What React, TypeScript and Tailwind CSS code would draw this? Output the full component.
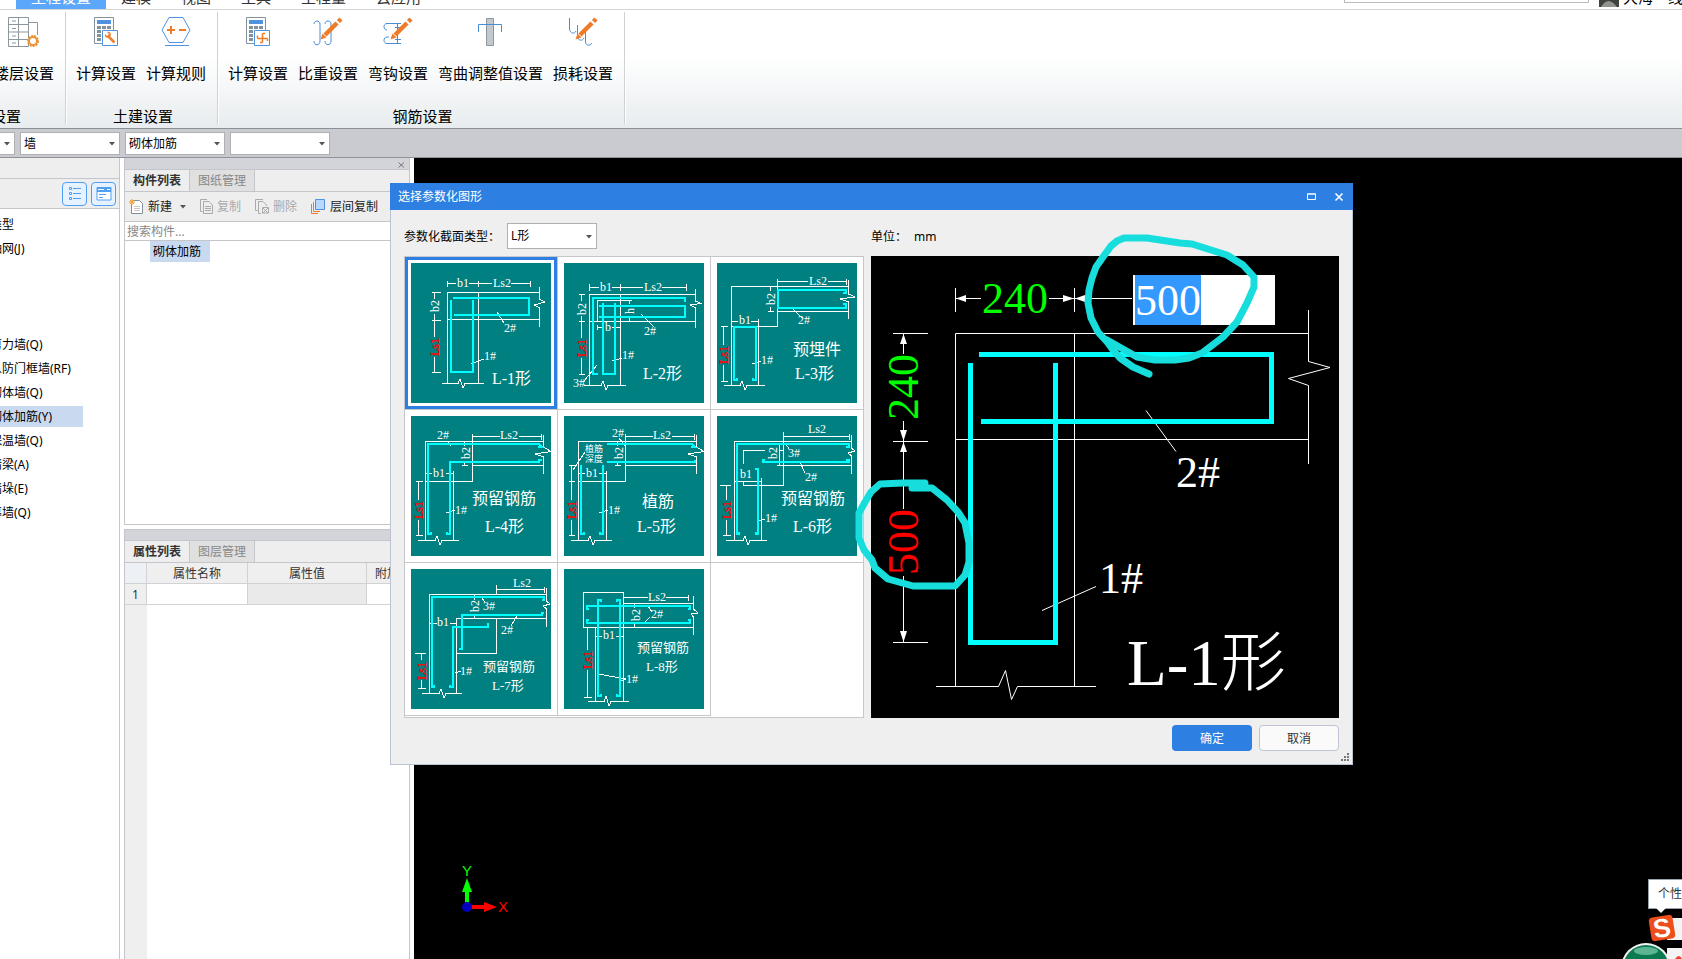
import { useEffect, useRef, type ReactNode } from "react";
import clsx from "clsx";

type Label = [text: string, x: number, y: number, size?: number];

interface Shape {
  name: string;
  lines: string;
  bars: string;
  labels: Label[];
  // vertical labels, given by their centre
  turned: Label[];
}

const shapes: Shape[] = [
  {
    name: "L-1形",
    lines:
      "M36.5 18V24M67.5 18V24M119.5 18V24M36.5 20.5H45M58 20.5H81M100 20.5H119.5M36.5 120V29.5H128.5M67.5 29.5V120M36.5 56.5H128.5M128.5 24V36L134 39L123 42L128.5 45V64M21 29.5H30M21 57.5H30M21 109.5H30M23.5 29.5V36M23.5 51V74M23.5 94V109.5M86 49L93 60M60 101L73 96M31 120.5H47L49 116L52 125L54 120.5H73",
    bars: "M42 35H118V52H43M40 37V109H62V37",
    labels: [["b1", 46, 24], ["Ls2", 82, 24], ["2#", 93, 69], ["1#", 73, 97], ["L-1形", 81, 121, 16]],
    turned: [["b2", 24, 43], ["Ls1", 24, 84]],
  },
  {
    name: "L-2形",
    lines:
      "M25.5 21V28M56.5 21V28M122.5 21V28M25.5 24.5H35M48 24.5H79M98 24.5H122.5M25.5 122V31.5H131.5M56.5 31.5V122M25.5 58.5H131.5M131.5 26V38L137 40.5L126 42L131.5 45V65M15 31.5H21M15 58.5H21M15 111.5H21M17.5 31.5V38M17.5 53V75M17.5 95V111.5M33.5 58V37.5H68M65.5 37.5V41M65.5 54V58.5M33.5 62V67M33.5 64.5H40M48 64.5H56.5M77 51L90 64M48 98L58 95M33 102L20 118M20 122.5H37L39 118L42 127L44 122.5H62",
    bars: "M34 111H29V35H121V39M35 43H121V54H35M39 40V111H51V40",
    labels: [["b1", 36, 28], ["Ls2", 80, 28], ["b", 41, 68], ["2#", 80, 72], ["1#", 58, 96], ["3#", 9, 124], ["L-2形", 79, 116, 16]],
    turned: [["b2", 18, 46], ["h", 66, 48], ["Ls1", 18, 85]],
  },
  {
    name: "L-3形",
    lines:
      "M60.5 16V63.5M129.5 16V22M60.5 18.5H91M111 18.5H129.5M14.5 122V23.5H131.5M131.5 17V31L138 34L123 36L131.5 39V56M14.5 63.5H60.5M60.5 48.5H131.5M41.5 56V122M51 48.5H57M53.5 24V28M53.5 44V48.5M14.5 58.5H21M34 58.5H41.5M4 63.5H11M4 118.5H11M6.5 63.5V82M6.5 102V118.5M74 44L85 55M35 101L44 98M7 122.5H23L25 118L28 127L30 122.5H48",
    bars: "M126 30H129V27H61V45H129V41H126M20 115V117H17V64H39V117H36V115",
    labels: [["Ls2", 92, 22], ["b1", 22, 61], ["2#", 81, 61], ["1#", 44, 101], ["预埋件", 76, 92, 16], ["L-3形", 78, 116, 16]],
    turned: [["b2", 54, 36], ["Ls1", 7, 92]],
  },
  {
    name: "L-4形",
    lines:
      "M61.5 18V65.5M130.5 18V24M61.5 20.5H89M108 20.5H130.5M14.5 124V25.5H132.5M132.5 19V31L140 35.5L124 38L132.5 41V58M14.5 65.5H61.5M61.5 49.5H132.5M42.5 55V124M51 49.5H57M53.5 26V30M53.5 46V49.5M14.5 57.5H21M35 57.5H42.5M5 65.5H12M5 119.5H12M7.5 65.5V84M7.5 104V119.5M36 25L40 30M35 97L44 94M7 124.5H24L26 120L29 129L31 124.5H48",
    bars: "M127 31H131L128 28H17V118H20V116M131 44H128V46H39V118H36V116",
    labels: [["Ls2", 89, 23], ["2#", 26, 23], ["b1", 22, 61], ["1#", 44, 98], ["预留钢筋", 61, 88, 16], ["L-4形", 74, 116, 16]],
    turned: [["b2", 55, 37], ["Ls1", 8, 94]],
  },
  {
    name: "L-5形",
    lines:
      "M61.5 18V65.5M130.5 18V24M61.5 20.5H89M108 20.5H130.5M14.5 124V25.5H132.5M132.5 19V31L140 35.5L124 38L132.5 41V58M14.5 65.5H61.5M61.5 49.5H132.5M42.5 55V124M51 49.5H57M53.5 26V30M53.5 46V49.5M14.5 57.5H21M35 57.5H42.5M5 49.5H11M5 65.5H11M5 119.5H11M7.5 49.5V84M7.5 104V119.5M21 36L9 54M55 22L61 30M35 97L44 94M7 124.5H24L26 120L29 129L31 124.5H48",
    bars: "M127 31H131L128 28H43M43 46H131V44M17 49V118H20V116M39 49V118H36V116",
    labels: [["Ls2", 89, 23], ["2#", 48, 21], ["植筋", 21, 36, 9], ["深度", 21, 46, 9], ["b1", 22, 61], ["1#", 44, 98], ["植筋", 78, 91, 16], ["L-5形", 73, 116, 16]],
    turned: [["b2", 55, 37], ["Ls1", 8, 94]],
  },
  {
    name: "L-6形",
    lines:
      "M66.5 16V69.5M132.5 18V24M66.5 20.5H132.5M17.5 124V25.5H134.5M134.5 19V32L138 35L131 37L134.5 40V58M60 49.5H134.5M26.5 48V34.5H48M62 34.5H66.5M26.5 66V69.5H66.5M44.5 62V124M17.5 65.5H44.5M62.5 28V49.5M3 69.5H14M6 119.5H14M9.5 69.5V84M9.5 104V119.5M69 28L72 33M83 46L88 57M42 105L48 103M9 124.5H26L28 120L31 129L33 124.5H50",
    bars: "M129 31H132V28H20V118H22V116M48 44H46V46H132V44H129M38 53H41V118H39V116",
    labels: [["Ls2", 91, 17], ["3#", 71, 41], ["b1", 23, 62], ["2#", 88, 65], ["1#", 48, 106], ["预留钢筋", 64, 88, 16], ["L-6形", 76, 116, 16]],
    turned: [["b2", 56, 37], ["Ls1", 10, 94]],
  },
  {
    name: "L-7形",
    lines:
      "M85.5 16V25M133.5 18V24M85.5 20.5H133.5M18.5 124V25.5H135.5M135.5 19V32L139 35L132 37L135.5 40V58M45.5 124V49.5H135.5M85.5 49.5V84.5H45.5M63.5 25V31M63.5 45V50M18.5 54.5H26M39 54.5H45.5M4 84.5H15M7 119.5H15M10.5 84.5V91M10.5 111V119.5M70 28L74 33M106 47L100 57M44 104L50 102M11 124.5H28L30 120L33 129L35 124.5H51",
    bars: "M131 31H133V28H21V118H23V116M133 44H131V46H51V80H48M77 54V58H42V118H39V116",
    labels: [["Ls2", 102, 18], ["3#", 72, 41], ["b1", 26, 57], ["2#", 90, 65], ["1#", 49, 106], ["预留钢筋", 72, 102, 13], ["L-7形", 81, 121, 13]],
    turned: [["b2", 64, 37], ["Ls1", 11, 102]],
  },
  {
    name: "L-8形",
    lines:
      "M59.5 28.5H84M102 28.5H124.5M124.5 26V32M59.5 132V23.5H19.5V58.5H129.5M59.5 34.5H129.5M129.5 27V40L134 44L127 45L129.5 48V66M31.5 58.5V132M70.5 34.5V39M70.5 54V58.5M31.5 67.5H38M52 67.5H59.5M20 58.5H28M20 128.5H28M23.5 58.5V81M23.5 101V128.5M84 37L88 43M80 54L86 48M34 105L62 110L56 112M24 132.5H40L42 127L45 137L47 132.5H65",
    bars: "M25 40H23V37H126V40H124M25 51H23V54H126V51H124M37 33V31H34V127H37V125M53 33V31H56V127H53V125",
    labels: [["Ls2", 84, 32], ["2#", 87, 49], ["b1", 39, 70], ["1#", 62, 114], ["预留钢筋", 73, 83, 13], ["L-8形", 82, 102, 13]],
    turned: [["b2", 72, 46], ["Ls1", 24, 91]],
  },
];

function Thumbnail({ shape }: { shape: Shape }) {
  return (
    <svg viewBox="0 0 140 140" className="block h-[140px] w-[140px] bg-[#008080]" fontFamily="'Liberation Serif', 'Noto Sans CJK SC', serif">
      <g fill="none" shapeRendering="crispEdges">
        <path d={shape.lines} stroke="#fff" />
        <path d={shape.bars} stroke="#0ff" strokeWidth="2" />
      </g>
      {shape.labels.map(([text, x, y, size = 12]) => (
        <text key={text + y} x={x} y={y} fontSize={size} fill="#fff">
          {text}
        </text>
      ))}
      {shape.turned.map(([text, x, y]) => (
        <text
          key={text}
          transform={`translate(${x + 4} ${y}) rotate(-90)`}
          textAnchor="middle"
          fontSize="12"
          fill={text === "Ls1" ? "#f00" : "#fff"}
          stroke={text === "Ls1" ? "#f00" : "none"}
          strokeWidth=".4"
        >
          {text}
        </text>
      ))}
    </svg>
  );
}

function Preview() {
  const input = useRef<HTMLInputElement>(null);

  useEffect(() => {
    input.current?.focus();
    input.current?.select();
  }, []);

  return (
    <div className="relative h-[462px] flex-1 bg-black">
      <svg width="468" height="462" viewBox="0 0 468 462" fontFamily="'Liberation Serif', 'Noto Sans CJK SC', serif">
        <g fill="none" stroke="#fff">
          <path d="M84.5 430.5V77.5H437.5M203.5 77.5V430.5M84.5 183.5H437.5M437.5 54V105.5L459 111.5L417.5 122.5L437.5 129.5V208" />
          <path d="M84.5 32V56M203.5 32V56M84.5 42.5H110M178 42.5H261" />
          <path d="M22 77.5H57M22 185.5H57M22 386.5H57M32.5 77.5V98M32.5 165V253M32.5 320V386.5" />
          <path d="M275 154.5L305 195.5M171 354.5L225 330.5M65 430.5H127.5L134.5 414.5L140.5 443.5L146.5 430.5H225" />
        </g>
        <path
          fill="#fff"
          d="M85 42.5L95 39V46ZM203 42.5L192 39V46ZM204 42.5L214 39V46ZM32.5 78L29 88H36ZM32.5 185L29 174H36ZM32.5 186L29 196H36ZM32.5 386L29 375H36Z"
        />
        <path fill="none" stroke="#0ff" strokeWidth="5" d="M108 98.5H400.5V165.5H110M99.5 107V386.5H184.5V107" />
        <g fontSize="44" fill="#fff">
          <text x="111" y="57" fill="#0f0">240</text>
          <text transform="translate(47 131) rotate(-90)" textAnchor="middle" fill="#0f0">240</text>
          <text transform="translate(47 286) rotate(-90)" textAnchor="middle" fill="#f00">500</text>
          <text x="305" y="231">2#</text>
          <text x="228" y="337">1#</text>
          <text x="256" y="429" fontSize="65" className="font-light">L-1形</text>
        </g>
      </svg>
      <input
        ref={input}
        aria-label="Ls2"
        defaultValue="500"
        className="absolute top-[19px] left-[262px] h-[50px] w-[142px] bg-white px-[2px] py-[3px] font-['Liberation_Serif',serif] text-[44px] leading-[44px] text-black outline-none selection:bg-[#3399ff] selection:text-white"
      />
      <svg
        width="468"
        height="462"
        viewBox="0 0 468 462"
        className="pointer-events-none absolute inset-0 overflow-visible"
        fill="none"
        stroke="#17dddd"
        strokeWidth="7"
        strokeLinecap="round"
        strokeLinejoin="round"
      >
        <path d="M278 118L262 111L249 102L242 94L237 87L227 76L220 62L217 47L218 34L221 22L225 11L232 1L240 -10L246 -15L253 -18H276L309 -13L321 -12L356 -1L372 9L383 21V31L376 47L366 66L352 81L331 97L318 102L304 104H284L266 101L236 84" />
        <path d="M54 227H32L9 228L0 236L-6 246L-12 257V282L-7 294L1 304L4 312L17 323L42 330H84L94 319L98 306V287L94 267L87 256L76 244L61 232H41" />
      </svg>
    </div>
  );
}

function Select({ label, value, className }: { label: string; value: string; className?: string }) {
  return (
    <div className={clsx("relative border border-[#b0b0b0] bg-white text-xs", className)}>
      <select aria-label={label} defaultValue={value} className="h-full w-full appearance-none pl-[3px] outline-none">
        <option>{value}</option>
      </select>
      <svg width="6" height="4" className="pointer-events-none absolute top-1/2 right-1 -mt-[2px]">
        <path d="M0 0H6L3 3.5Z" fill="#555" />
      </svg>
    </div>
  );
}

function Pencil() {
  return (
    <g>
      <path d="M7.500 22.500L9.500 16.500L13.500 20.500Z" fill="#ee7b28" />
      <path d="M12 18L24 6" stroke="#ee7b28" strokeWidth="4.500" />
      <path d="M25.500 4.500L28 2" stroke="#ee7b28" strokeWidth="4.500" />
    </g>
  );
}

function Calculator({ children }: { children: ReactNode }) {
  return (
    <svg width="26" height="30" viewBox="0 0 26 30">
      <path d="M1.500 .5H20.500V26.500H1.500Z" fill="#fff" stroke="#83919a" />
      <path d="M4 3H18V7H4Z" fill="#4f93e0" />
      <path d="M4 9H8V12H4ZM9 9H13V12H9ZM14 9H18V12H14ZM4 13H8V16H4ZM4 17H8V20H4ZM4 21H8V24H4Z" fill="#83919a" />
      <path d="M9.500 13.500H24.500V28.500H9.500Z" fill="#fff" stroke="#4f93e0" />
      {children}
    </svg>
  );
}

const floorIcon = (
  <svg width="32" height="30" viewBox="0 0 32 30" fill="none" stroke="#8b979e">
    <path d="M.5 .5H20.500V29.500H.5ZM.5 7.500H20.500M.5 15H20.500M.5 22.500H20.500M10.500 .5V29.500M4 4H8M4 11.500H8M4 19H8M4 26H8M20.500 5.500H29.500V18" />
    <circle cx="25" cy="24" r="5" fill="#fff" stroke="#ec9238" strokeWidth="2" strokeDasharray="2 1" />
    <circle cx="25" cy="24" r="4" stroke="#ec9238" strokeWidth="2" />
  </svg>
);

const wrenchIcon = (
  <Calculator>
    <path d="M15 19L21.500 25.500" stroke="#ee8130" strokeWidth="2.500" />
    <path d="M12 17L14 19L16 17L14 15C17 14 19 17 17 20C14 22 11 20 12 17Z" fill="#ee8130" />
  </Calculator>
);

const rebarCalcIcon = (
  <Calculator>
    <path d="M17.500 16.500V25.500M12.500 21.500H22.500M17.500 16.500H20M12.500 21.500V18.500M22.500 21.500V24M17.500 25.500H15" stroke="#ee7b28" strokeWidth="1.500" fill="none" />
  </Calculator>
);

const rulesIcon = (
  <svg width="30" height="30" viewBox="0 0 30 30" fill="none">
    <path d="M8 .5H22L29 13L22 25.500H8L1 13ZM4 28.500H28" stroke="#4f93e0" />
    <path d="M6 13H14M10 9V17M18 13H25" stroke="#ee7b28" strokeWidth="2" />
  </svg>
);

const weightIcon = (
  <svg width="30" height="30" viewBox="0 0 30 30" fill="none">
    <path d="M1 7C1 3 7 3 7 7V24C7 29 1 29 1 24M12 7C12 3 18 3 18 7V24C18 29 12 29 12 24" stroke="#4a8dd5" />
    <Pencil />
  </svg>
);

const hookIcon = (
  <svg width="30" height="30" viewBox="0 0 30 30" fill="none">
    <path d="M18 6.500H4C0 6.500 0 13 4 13M18 26.500H4C0 26.500 0 20 4 20H6M14.500 7V26M12 10.500H18M12 22.500H18" stroke="#4a8dd5" />
    <Pencil />
  </svg>
);

const bendIcon = (
  <svg width="26" height="30" viewBox="0 0 26 30" fill="none">
    <path d="M8.500 1.500H15.500V28.500H8.500Z" fill="#c3c8cc" stroke="#8b979e" />
    <path d="M.5 15V7.500H23.500V15" stroke="#4a8dd5" />
  </svg>
);

const lossIcon = (
  <svg width="30" height="30" viewBox="0 0 30 30" fill="none">
    <path d="M1.500 1V12C2 17 7 17 8 14M9.500 8V20C10 24 15 24 16 21M17.500 15V25C18 29 22 29 24 26" stroke="#4a8dd5" />
    <Pencil />
  </svg>
);

function RibbonButton({ icon, label }: { icon: ReactNode; label: string }) {
  return (
    <button type="button" className="flex flex-col items-center px-[5px]">
      {icon}
      <span className="mt-4 text-[15px] leading-5 whitespace-nowrap">{label}</span>
    </button>
  );
}

function RibbonGroup({ title, children }: { title: string; children: ReactNode }) {
  return (
    <div className="flex flex-col pt-[7px] pr-[6px] pl-1">
      <div className="flex">{children}</div>
      <div className="mt-[23px] pl-1 text-center text-[15px] leading-5">{title}</div>
    </div>
  );
}

const Divider = () => <div className="mt-[2px] mb-[3px] w-[2px] border-l border-[#cfd2d5] bg-white" />;

function PaneTabs({ active, other }: { active: string; other: string }) {
  return (
    <div className="flex h-[22px] shrink-0 border-b border-[#c4c6cc] bg-[#eeeeef] text-xs">
      <button type="button" className="w-16 font-bold text-[#333]">
        {active}
      </button>
      <button type="button" className="w-[66px] border-x border-[#c4c6cc] bg-[#e0e0e1] text-[#888]">
        {other}
      </button>
    </div>
  );
}

const tools = [
  {
    label: "新建",
    icon: (
      <svg width="15" height="15" viewBox="0 0 15 15" fill="none">
        <path d="M3.500 1.500H10.500L13.500 4.500V14.500H2.500V5" fill="#fff" stroke="#83919a" />
        <path d="M5 7.500H11M5 9.500H11M5 11.500H11" stroke="#cfc4c4" />
        <path d="M0 3H6M3 0V6M1 1L5 5M5 1L1 5" stroke="#f59a23" />
      </svg>
    ),
  },
  {
    label: "复制",
    disabled: true,
    icon: (
      <svg width="13" height="15" viewBox="0 0 13 15" fill="none" stroke="#aaa">
        <path d="M2.500 12.500H.5V.5H7M3.500 2.500H9L12.500 6V14.500H3.500ZM5 7.500H11M5 9.500H11M5 11.500H11" />
      </svg>
    ),
  },
  {
    label: "删除",
    disabled: true,
    icon: (
      <svg width="14" height="15" viewBox="0 0 14 15" fill="none" stroke="#aaa">
        <path d="M2.500 11.500H.5V.5H8M6 14.500H3.500V2.500H8L11.500 6V7M7.500 8.500H13.500V14H7.500ZM8 9L13 14M13 9L8 14" />
      </svg>
    ),
  },
  {
    label: "层间复制",
    icon: (
      <svg width="15" height="15" viewBox="0 0 15 15" fill="none">
        <path d="M.5 5V14.500H7M2.500 3V12.500H9" stroke="#ee7b28" />
        <path d="M4.500 .5H13.500V10.500H4.500Z" fill="#b9d7fb" stroke="#4f93e0" />
      </svg>
    ),
  },
];

const walls = ["剪力墙(Q)", "人防门框墙(RF)", "砌体墙(Q)", "砌体加筋(Y)", "保温墙(Q)", "暗梁(A)", "墙垛(E)", "幕墙(Q)"];

function NavPane() {
  return (
    <aside className="w-[120px] shrink-0 overflow-hidden border-r border-[#c4c6cc] bg-white text-xs">
      <div className="h-[21px] border-b border-[#c4c6cc] bg-[#eeeeef]" />
      <div className="flex h-[30px] items-center justify-end gap-1 border-b border-[#c4c6cc] bg-[#eeeeef] pr-[3px]">
        <button type="button" aria-label="列表" className="flex h-6 w-[25px] items-center justify-center rounded-sm border border-[#4fa0f5] bg-[#e6f2ff]">
          <svg width="14" height="14" viewBox="0 0 14 14" fill="none" stroke="#4fa0f5">
            <path d="M1.500 .5H3.500V2.500H1.500ZM1.500 5.500H3.500V7.500H1.500ZM1.500 10.500H3.500V12.500H1.500ZM5 1.500H13M5 6.500H13M5 11.500H13" />
          </svg>
        </button>
        <button type="button" aria-label="图标" className="flex h-6 w-[25px] items-center justify-center rounded-sm border border-[#4fa0f5] bg-[#e6f2ff]">
          <svg width="16" height="14" viewBox="0 0 16 14" fill="none">
            <path d="M1 .5H15V13H1Z" fill="#fff" stroke="#4fa0f5" />
            <path d="M1 0H15V5H1Z" fill="#4fa0f5" />
            <path d="M2 2.500H8M11 2.500H14" stroke="#fff" />
            <path d="M3 7.500H10M3 10.500H7" stroke="#4fa0f5" />
          </svg>
        </button>
      </div>
      <ul className="pt-1 whitespace-nowrap">
        {["类型", "轴网(J)"].map((item) => (
          <li key={item} className="-ml-[10px] leading-6">
            {item}
          </li>
        ))}
      </ul>
      <ul className="pt-[71px] whitespace-nowrap">
        {walls.map((item) => (
          <li key={item} className="flex h-6 items-center">
            <a
              href="#"
              className={clsx("leading-[21px]", item === "砌体加筋(Y)" ? "w-[83px] bg-[#c9d9ef]" : "w-full")}
            >
              <span className="-ml-[10px]">{item}</span>
            </a>
          </li>
        ))}
      </ul>
    </aside>
  );
}

function ComponentPane() {
  return (
    <section className="mr-1 ml-1 flex w-[286px] shrink-0 flex-col text-xs">
      <div className="border-x border-b border-[#c4c6cc]">
        <div className="flex h-3 items-end justify-end border-b border-[#c4c6cc] bg-[#d3d4d9] pr-1 pb-px">
          <button type="button" aria-label="关闭" className="flex">
            <svg width="7" height="6" viewBox="0 0 7 6">
              <path d="M.5 .5L6 5.500M6 .5L.5 5.500" stroke="#777" />
            </svg>
          </button>
        </div>
        <PaneTabs active="构件列表" other="图纸管理" />
        <div className="flex h-[30px] items-center gap-[14px] border-b border-[#c4c6cc] bg-[#eeeeef] pl-1">
          {tools.map(({ label, icon, disabled }) => (
            <button
              key={label}
              type="button"
              disabled={disabled}
              className={clsx("flex items-center gap-1 whitespace-nowrap", disabled ? "text-[#aaa]" : "text-[#222]")}
            >
              {icon}
              {label}
              {label === "新建" && (
                <svg width="6" height="4" className="ml-1">
                  <path d="M0 0H6L3 3.500Z" fill="#555" />
                </svg>
              )}
            </button>
          ))}
        </div>
        <input
          type="text"
          aria-label="搜索构件"
          placeholder="搜索构件..."
          className="block h-[19px] w-full border-b border-[#c4c6cc] px-[2px] outline-none placeholder:text-[#888]"
        />
        <ul className="h-[283px] pl-[25px]">
          <li className="w-[60px] bg-[#c9d9ef] pl-[3px] leading-[21px]">砌体加筋</li>
        </ul>
      </div>
      <div className="mt-1 flex flex-1 flex-col border-x border-t border-[#c4c6cc]">
        <div className="h-[11px] shrink-0 border-b border-[#c4c6cc] bg-[#d3d4d9]" />
        <PaneTabs active="属性列表" other="图层管理" />
        <table className="w-full table-fixed border-separate border-spacing-0 text-[#333]">
          <thead>
            <tr className="h-[21px] bg-[#efefef]">
              <th className="w-[22px] border-r border-b border-[#d2d2d4] bg-[#edf1f6]" />
              <th className="w-[101px] border-r border-b border-[#d2d2d4] p-0 pt-px font-normal">属性名称</th>
              <th className="w-[119px] border-r border-b border-[#d2d2d4] p-0 pt-px font-normal">属性值</th>
              <th className="overflow-hidden border-b border-[#d2d2d4] p-0 pt-px pl-2 text-left font-normal whitespace-nowrap">附加</th>
            </tr>
          </thead>
          <tbody>
            <tr className="h-[21px]">
              <td className="border-r border-b border-[#d2d2d4] bg-[#efefef] p-0 pt-px text-center">1</td>
              <td className="border-r border-b border-[#d2d2d4]" />
              <td className="border-r border-b border-[#d2d2d4] bg-[#eaeaea]" />
              <td className="border-b border-[#d2d2d4]" />
            </tr>
          </tbody>
        </table>
        <div className="w-[22px] flex-1 bg-[#efefef]" />
      </div>
    </section>
  );
}

function ShapeDialog() {
  return (
    <div
      role="dialog"
      aria-label="选择参数化图形"
      className="absolute top-[183px] left-[390px] flex w-[963px] flex-col border-x border-b border-[#bcc3d6] bg-[#efefef] text-xs text-black"
    >
      <div className="-mx-px flex h-[27px] items-center bg-[#2d7fe1] pr-[9px] pl-2 text-white">
        <span className="flex-1">选择参数化图形</span>
        <button type="button" aria-label="最大化" className="mr-[18px]">
          <svg width="9" height="7" viewBox="0 0 9 7">
            <path d="M.5 1H8.500V6.500H.5ZM0 1H9" fill="none" stroke="#fff" />
          </svg>
        </button>
        <button type="button" aria-label="关闭">
          <svg width="10" height="8" viewBox="0 0 10 8">
            <path d="M1.500 .5L8.500 7.500M8.500 .5L1.500 7.500" stroke="#fff" strokeWidth="1.500" />
          </svg>
        </button>
      </div>
      <div className="flex gap-[7px] px-[13px]">
        <div>
          <div className="flex h-[46px] items-center pt-[6px]">
            <label htmlFor="section-type" className="w-[103px] pt-[2px]">
              参数化截面类型：
            </label>
            <div className="relative h-[26px] w-[90px] border border-[#b0b0b0] bg-white">
              <select id="section-type" defaultValue="L形" className="h-full w-full appearance-none pl-[3px] outline-none">
                <option>L形</option>
              </select>
              <svg width="6" height="4" className="pointer-events-none absolute top-1/2 right-1 -mt-px">
                <path d="M0 0H6L3 3.5Z" fill="#555" />
              </svg>
            </div>
          </div>
          <div className="grid h-[462px] grid-cols-[153px_153px_152px] content-start border border-[#c5c7cb] bg-white">
            {shapes.map((shape, i) => (
              <button
                key={shape.name}
                type="button"
                aria-label={shape.name}
                className={clsx("h-[153px] border-b border-[#c5c7cb]", i % 3 !== 2 && "border-r")}
              >
                <div className={clsx("border-[3px] p-[3px]", i === 0 ? "border-[#2d7fe1]" : "border-white")}>
                  <Thumbnail shape={shape} />
                </div>
              </button>
            ))}
          </div>
        </div>
        <div className="flex flex-1 flex-col">
          <div className="flex h-[46px] items-center gap-[7px] pt-2">
            <span>单位：</span>
            <span>mm</span>
          </div>
          <Preview />
        </div>
      </div>
      <div className="flex justify-end gap-[7px] px-[13px] pt-[7px] pb-[13px]">
        <button type="button" className="h-[26px] w-20 rounded-sm bg-[#2d7fe1] pt-px text-white">
          确定
        </button>
        <button type="button" className="h-[26px] w-20 rounded-sm border border-[#bfc5d4] bg-[#fafafa] pt-px text-[#333]">
          取消
        </button>
      </div>
      <svg width="8" height="8" className="absolute right-[3px] bottom-[3px]">
        <path d="M6 0H8V2H6ZM3 3H5V5H3ZM6 3H8V5H6ZM0 6H2V8H0ZM3 6H5V8H3ZM6 6H8V8H6Z" fill="#777" />
      </svg>
    </div>
  );
}

const menus = ["建模", "视图", "工具", "工程量", "云应用"];

export default function App() {
  return (
    <div className="relative flex h-screen flex-col overflow-hidden bg-white font-['Noto_Sans','Noto_Sans_CJK_SC',sans-serif] text-black">
      <header className="flex h-[10px] shrink-0 items-end overflow-hidden border-b border-[#d5d5d5] text-[15px] text-[#333]">
        <button type="button" className="ml-4 h-6 bg-[#5aa7fb] px-[15px] leading-6 whitespace-nowrap text-white">
          工程设置
        </button>
        {menus.map((menu) => (
          <button key={menu} type="button" className="h-6 px-[15px] leading-6 whitespace-nowrap">
            {menu}
          </button>
        ))}
        <input aria-label="搜索" className="mb-[6px] ml-auto h-5 w-[245px] border border-[#bbb] bg-white" />
        <svg width="20" height="20" className="mb-[2px] ml-[10px]">
          <path d="M0 0H20V20H0Z" fill="#3f423d" />
          <path d="M2 20Q9 8 18 20Z" fill="#8f948c" />
        </svg>
        <span className="ml-1 h-6 w-[59px] leading-6 whitespace-nowrap text-black">大海一线</span>
      </header>

      <div className="flex h-[119px] shrink-0 overflow-hidden border-b border-[#8a9096] bg-linear-to-b from-white from-40% to-[#e8ecee]">
        <div className="w-[65px] pt-[7px]">
          <div className="-ml-[11px] flex">
            <RibbonButton icon={floorIcon} label="楼层设置" />
          </div>
          <div className="mt-[23px] -ml-[9px] text-[15px] leading-5">设置</div>
        </div>
        <Divider />
        <RibbonGroup title="土建设置">
          <RibbonButton icon={wrenchIcon} label="计算设置" />
          <RibbonButton icon={rulesIcon} label="计算规则" />
        </RibbonGroup>
        <Divider />
        <RibbonGroup title="钢筋设置">
          <RibbonButton icon={rebarCalcIcon} label="计算设置" />
          <RibbonButton icon={weightIcon} label="比重设置" />
          <RibbonButton icon={hookIcon} label="弯钩设置" />
          <RibbonButton icon={bendIcon} label="弯曲调整值设置" />
          <RibbonButton icon={lossIcon} label="损耗设置" />
        </RibbonGroup>
        <Divider />
      </div>

      <div className="flex h-[29px] shrink-0 gap-[5px] border-b border-[#8f9398] bg-[#c9cbd0] pt-[3px]">
        <Select label="楼层" value="" className="h-[23px] w-[15px] border-l-0" />
        <Select label="构件类别" value="墙" className="h-[23px] w-[100px]" />
        <Select label="构件类型" value="砌体加筋" className="h-[23px] w-[100px]" />
        <Select label="构件" value="" className="h-[23px] w-[100px]" />
      </div>

      <div className="flex min-h-0 flex-1">
        <NavPane />
        <ComponentPane />
        <main className="relative flex-1 overflow-hidden bg-black">
          <svg width="70" height="60" viewBox="0 0 70 60" className="absolute bottom-[33px] left-10" fontFamily="'Liberation Sans', sans-serif" fontSize="15">
            <path d="M13 41V25" stroke="#0f0" strokeWidth="4" />
            <path d="M13 12L18 26H8Z" fill="#0f0" />
            <path d="M13 41H31" stroke="#f00" strokeWidth="4" />
            <path d="M30 36L43 41L30 46Z" fill="#f00" />
            <circle cx="13" cy="41" r="5" fill="#0000c0" />
            <text x="8" y="10" fill="#0f0">Y</text>
            <text x="44" y="46" fill="#f00">X</text>
          </svg>
        </main>
      </div>

      <ShapeDialog />

      <div className="absolute right-0 bottom-0 h-20 w-[60px] overflow-hidden">
        <div className="ml-[26px] h-[30px] border border-r-0 border-[#9aa3ad] bg-white pl-[9px] text-xs leading-7 whitespace-nowrap text-[#333]">
          个性
        </div>
        <svg width="60" height="51" viewBox="0 -1 60 51" className="absolute bottom-0 left-0">
          <path d="M34 -1L39 4L44 -1Z" fill="#fff" />
          <path d="M45 9H60V31H45ZM45 39H60V50H45Z" fill="#f4f4f4" />
          <path d="M53 50Q57 44 60 50Z" fill="#e8442e" />
          <rect x="28" y="7" width="24" height="24" rx="4" fill="#ee4e1b" transform="rotate(-9 40 19)" />
          <text x="40" y="28" textAnchor="middle" fill="#fff" fontSize="26" fontFamily="'Liberation Sans', sans-serif" className="font-bold" transform="rotate(-9 40 19)">
            S
          </text>
          <circle cx="24" cy="59" r="25" fill="#f2f2f2" />
          <circle cx="24" cy="59" r="23" fill="#0c7a50" />
          <ellipse cx="24" cy="42" rx="12" ry="4" fill="#5cb592" />
        </svg>
      </div>
    </div>
  );
}
